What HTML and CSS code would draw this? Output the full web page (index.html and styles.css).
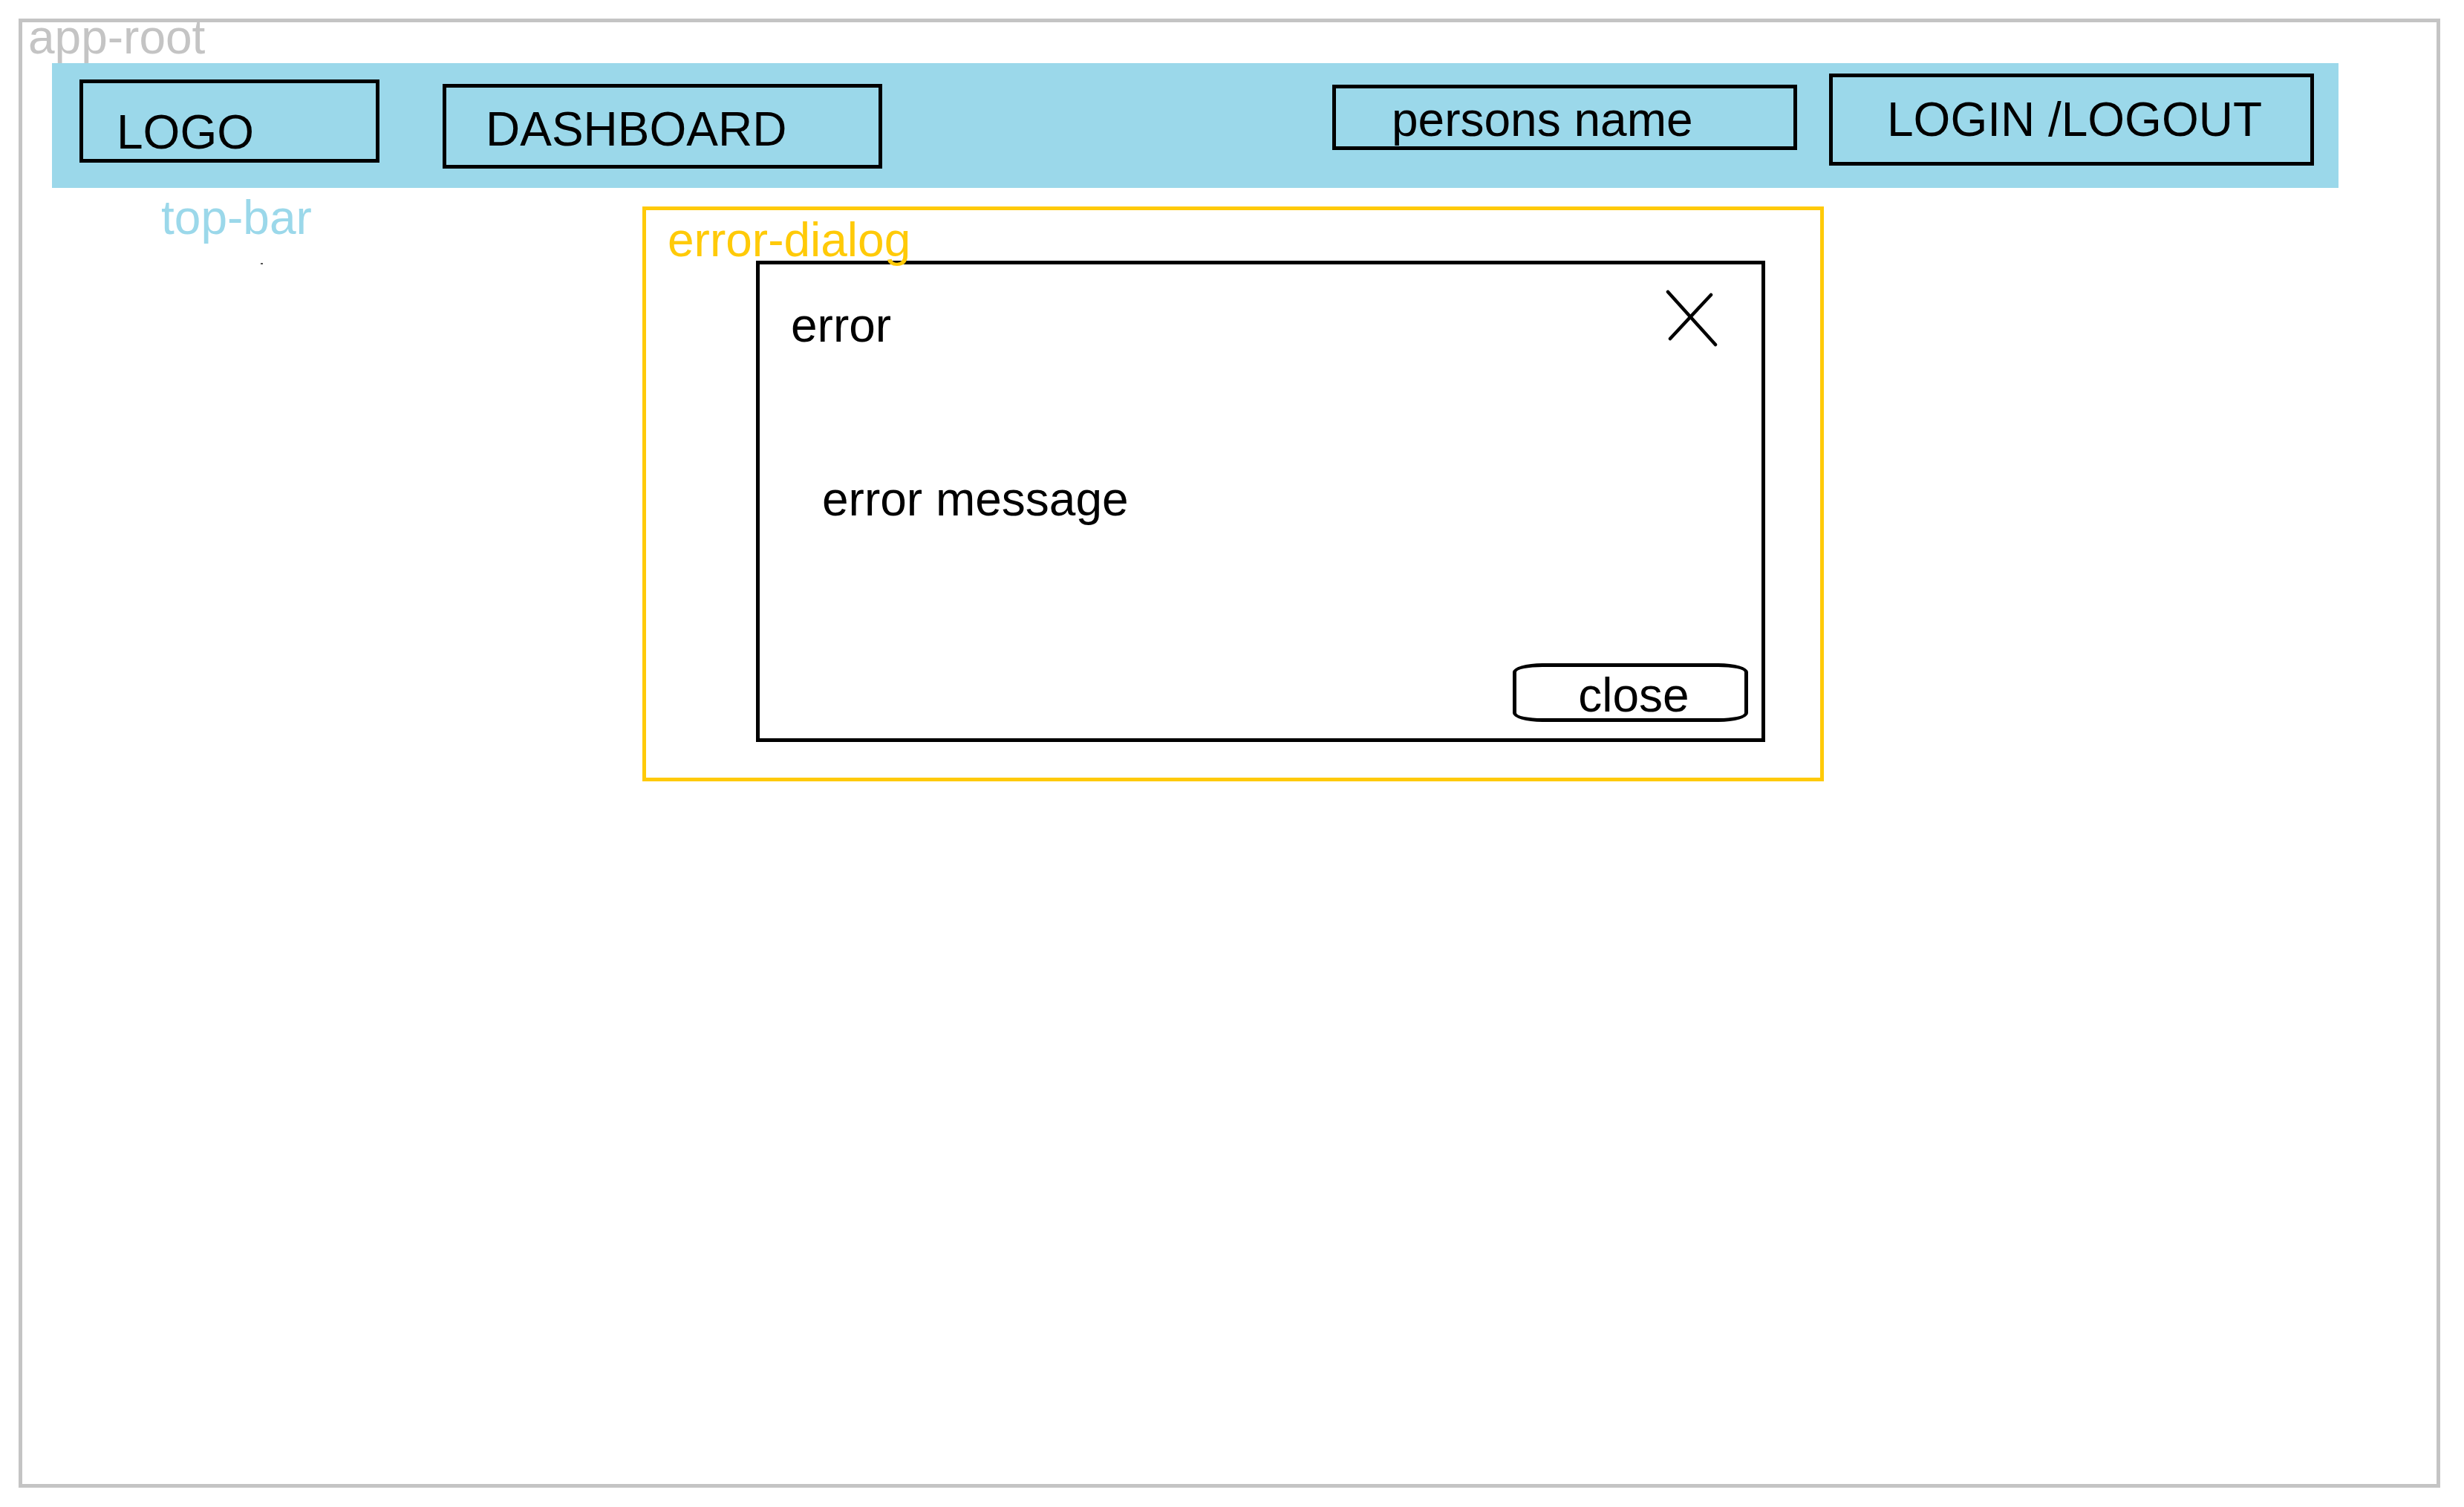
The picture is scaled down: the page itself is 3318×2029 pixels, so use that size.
FILE: index.html
```html
<!DOCTYPE html>
<html lang="en">
<head>
<meta charset="utf-8">
<title>app-root wireframe</title>
<link rel="stylesheet" href="styles.css">
</head>
<body>
<div class="app-root">
  <div class="root-label">app-root</div>
  <header class="top-bar">
    <div class="box logo">LOGO</div>
    <div class="box dash">DASHBOARD</div>
    <div class="box person">persons name</div>
    <div class="box login">LOGIN /LOGOUT</div>
  </header>
  <div class="stage">
    <div class="bar-caption">
      <div class="bar-label">top-bar</div>
      <span class="speck"></span>
    </div>
    <section class="error-dialog">
      <div class="dialog-label">error-dialog</div>
      <div class="dialog">
        <div class="dialog-head">
          <div class="dialog-title">error</div>
          <svg class="close-x" viewBox="0 0 76 83" width="76" height="83" aria-hidden="true">
            <line x1="6" y1="6" x2="70" y2="77" stroke="#000" stroke-width="4.5" stroke-linecap="round"/>
            <line x1="64" y1="10" x2="9" y2="69" stroke="#000" stroke-width="4.5" stroke-linecap="round"/>
          </svg>
        </div>
        <div class="dialog-msg">error message</div>
        <div class="close-btn" role="button">close</div>
      </div>
    </section>
  </div>
</div>
</body>
</html>
```

FILE: styles.css
```css
* {
  box-sizing: border-box;
}

html, body {
  margin: 0;
  padding: 0;
  background: #ffffff;
}

body {
  font-family: "Liberation Sans", Arial, Helvetica, sans-serif;
  font-size: 64px;
  color: #000;
}

.app-root {
  margin: 25px 0 0 25px;
  width: 3261px;
  height: 1978px;
  border: 5px solid #c4c4c4;
  display: flex;
  flex-direction: column;
  align-items: flex-start;
}

.root-label {
  margin-left: 8px;
  height: 40px;
  line-height: 40px;
  color: #c4c4c4;
  white-space: nowrap;
}

.top-bar {
  margin-top: 15px;
  margin-left: 40px;
  width: 3079px;
  height: 168px;
  background: #9bd8ea;
  display: flex;
  align-items: flex-start;
  padding-right: 33px;
}

.box {
  border: 5px solid #000;
  line-height: 72px;
  white-space: nowrap;
}

.logo {
  margin-top: 22px;
  margin-left: 37px;
  width: 404px;
  height: 112px;
  padding: 30px 0 0 45px;
}

.dash {
  margin-top: 28px;
  margin-left: 85px;
  width: 592px;
  height: 114px;
  padding: 20px 0 0 53px;
}

.person {
  margin-top: 29px;
  margin-left: auto;
  width: 626px;
  height: 88px;
  padding: 6px 0 0 75px;
}

.login {
  margin-top: 14px;
  margin-left: 43px;
  width: 653px;
  height: 124px;
  padding: 21px 0 0 73px;
}

.stage {
  display: flex;
  align-items: flex-start;
  padding-left: 187px;
}

.bar-caption {
  width: 648px;
  flex-shrink: 0;
  margin-top: 4px;
  display: flex;
  flex-direction: column;
  align-items: flex-start;
}

.bar-label {
  line-height: 72px;
  color: #9bd8ea;
  white-space: nowrap;
}

.speck {
  display: block;
  margin-top: 25px;
  margin-left: 134px;
  width: 3px;
  height: 2px;
  background: #555;
}

.error-dialog {
  margin-top: 25px;
  width: 1591px;
  border: 5px solid #ffca08;
  padding: 12px 0 48px 0;
  display: flex;
  flex-direction: column;
  align-items: flex-start;
}

.dialog-label {
  margin-left: 29px;
  height: 56px;
  line-height: 56px;
  color: #ffca08;
  white-space: nowrap;
  position: relative;
  z-index: 1;
}

.dialog {
  margin-left: 148px;
  width: 1359px;
  height: 648px;
  border: 5px solid #000;
  display: flex;
  flex-direction: column;
  align-items: flex-start;
}

.dialog-head {
  width: 100%;
  display: flex;
  justify-content: space-between;
  align-items: flex-start;
  padding: 0 56px 0 42px;
}

.dialog-title {
  margin-top: 46px;
  line-height: 72px;
}

.close-x {
  display: block;
  margin-top: 31px;
}

.dialog-msg {
  margin-top: 162px;
  margin-left: 84px;
  line-height: 72px;
  white-space: nowrap;
}

.close-btn {
  align-self: flex-end;
  margin-top: auto;
  margin-right: 18px;
  margin-bottom: 22px;
  width: 317px;
  height: 79px;
  border: 5px solid #000;
  border-radius: 40px / 12px;
  padding: 6px 0 0 9px;
  line-height: 64px;
  text-align: center;
  background: #fff;
}
```
